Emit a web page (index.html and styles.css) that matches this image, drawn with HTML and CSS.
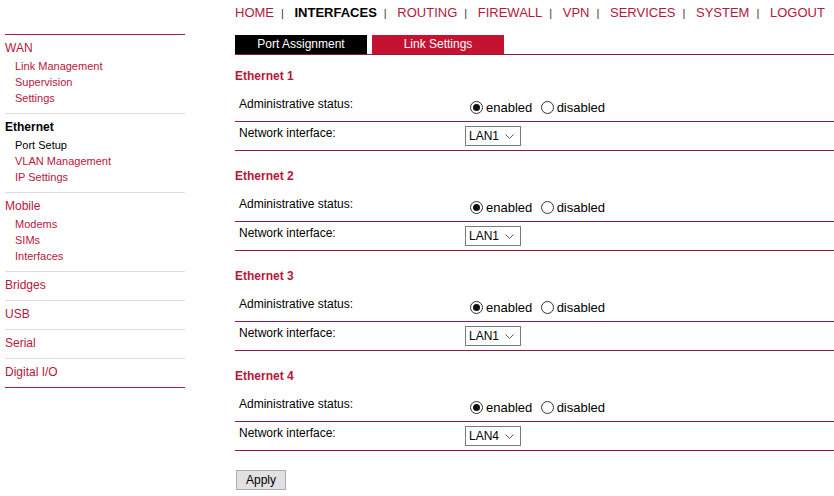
FILE: index.html
```html
<!DOCTYPE html>
<html lang="en">
<head>
    <meta charset="UTF-8">
    <meta name="viewport" content="width=device-width, initial-scale=1.0">
    <title>Interfaces - Port Setup</title>
    <link rel="stylesheet" href="styles.css">
</head>
<body>
    <div class="page">
        <!-- left menu -->
        <div class="sidebar">
            <div class="menu-group">
                <a class="menu-main" href="#">WAN</a>
                <div class="menu-sub">
                    <a href="#">Link Management</a>
                    <a href="#">Supervision</a>
                    <a href="#">Settings</a>
                </div>
            </div>
            <div class="menu-group">
                <a class="menu-main active" href="#">Ethernet</a>
                <div class="menu-sub">
                    <a class="active" href="#">Port Setup</a>
                    <a href="#">VLAN Management</a>
                    <a href="#">IP Settings</a>
                </div>
            </div>
            <div class="menu-group">
                <a class="menu-main" href="#">Mobile</a>
                <div class="menu-sub">
                    <a href="#">Modems</a>
                    <a href="#">SIMs</a>
                    <a href="#">Interfaces</a>
                </div>
            </div>
            <div class="menu-group">
                <a class="menu-main" href="#">Bridges</a>
            </div>
            <div class="menu-group">
                <a class="menu-main" href="#">USB</a>
            </div>
            <div class="menu-group">
                <a class="menu-main" href="#">Serial</a>
            </div>
            <div class="menu-group last">
                <a class="menu-main" href="#">Digital I/O</a>
            </div>
        </div>

        <div class="main">
            <!-- top menu -->
            <div class="topnav">
                <a href="#">HOME</a><span class="sep">|</span>
                <a class="active" href="#">INTERFACES</a><span class="sep">|</span>
                <a href="#">ROUTING</a><span class="sep">|</span>
                <a href="#">FIREWALL</a><span class="sep">|</span>
                <a href="#">VPN</a><span class="sep">|</span>
                <a href="#">SERVICES</a><span class="sep">|</span>
                <a href="#">SYSTEM</a><span class="sep">|</span>
                <a href="#">LOGOUT</a>
            </div>

            <div class="tabs">
                <a class="tab active" href="#">Port Assignment</a>
                <a class="tab" href="#">Link Settings</a>
            </div>

            <form class="port-form">
                <div class="port-section">
                    <h3>Ethernet 1</h3>
                    <div class="form-row">
                        <div class="form-label">Administrative status:</div>
                        <div class="form-value radios">
                            <label><input type="radio" name="eth1" checked>enabled</label>
                            <label><input type="radio" name="eth1">disabled</label>
                        </div>
                    </div>
                    <div class="form-row">
                        <div class="form-label">Network interface:</div>
                        <div class="form-value">
                            <span class="select-wrap">
                                <select><option>LAN1</option><option>LAN2</option><option>LAN3</option><option>LAN4</option></select>
                                <svg class="chevron" width="9" height="5" viewBox="0 0 9 5"><path d="M0.5 0.5 L4.5 4.5 L8.5 0.5" fill="none" stroke="#555" stroke-width="1"/></svg>
                            </span>
                        </div>
                    </div>
                </div>

                <div class="port-section">
                    <h3>Ethernet 2</h3>
                    <div class="form-row">
                        <div class="form-label">Administrative status:</div>
                        <div class="form-value radios">
                            <label><input type="radio" name="eth2" checked>enabled</label>
                            <label><input type="radio" name="eth2">disabled</label>
                        </div>
                    </div>
                    <div class="form-row">
                        <div class="form-label">Network interface:</div>
                        <div class="form-value">
                            <span class="select-wrap">
                                <select><option>LAN1</option><option>LAN2</option><option>LAN3</option><option>LAN4</option></select>
                                <svg class="chevron" width="9" height="5" viewBox="0 0 9 5"><path d="M0.5 0.5 L4.5 4.5 L8.5 0.5" fill="none" stroke="#555" stroke-width="1"/></svg>
                            </span>
                        </div>
                    </div>
                </div>

                <div class="port-section">
                    <h3>Ethernet 3</h3>
                    <div class="form-row">
                        <div class="form-label">Administrative status:</div>
                        <div class="form-value radios">
                            <label><input type="radio" name="eth3" checked>enabled</label>
                            <label><input type="radio" name="eth3">disabled</label>
                        </div>
                    </div>
                    <div class="form-row">
                        <div class="form-label">Network interface:</div>
                        <div class="form-value">
                            <span class="select-wrap">
                                <select><option>LAN1</option><option>LAN2</option><option>LAN3</option><option>LAN4</option></select>
                                <svg class="chevron" width="9" height="5" viewBox="0 0 9 5"><path d="M0.5 0.5 L4.5 4.5 L8.5 0.5" fill="none" stroke="#555" stroke-width="1"/></svg>
                            </span>
                        </div>
                    </div>
                </div>

                <div class="port-section">
                    <h3>Ethernet 4</h3>
                    <div class="form-row">
                        <div class="form-label">Administrative status:</div>
                        <div class="form-value radios">
                            <label><input type="radio" name="eth4" checked>enabled</label>
                            <label><input type="radio" name="eth4">disabled</label>
                        </div>
                    </div>
                    <div class="form-row">
                        <div class="form-label">Network interface:</div>
                        <div class="form-value">
                            <span class="select-wrap">
                                <select><option>LAN1</option><option>LAN2</option><option>LAN3</option><option selected>LAN4</option></select>
                                <svg class="chevron" width="9" height="5" viewBox="0 0 9 5"><path d="M0.5 0.5 L4.5 4.5 L8.5 0.5" fill="none" stroke="#555" stroke-width="1"/></svg>
                            </span>
                        </div>
                    </div>
                </div>

                <button type="button" class="apply-btn">Apply</button>
            </form>
        </div>
    </div>
</body>
</html>
```

FILE: styles.css
```css
html, body {
    margin: 0;
    padding: 0;
    background: #fff;
}
body {
    font-family: "Liberation Sans", Arial, sans-serif;
    font-size: 12px;
    color: #000;
}
a {
    text-decoration: none;
    color: #b5173d;
}

.page {
    display: flex;
    align-items: flex-start;
}

/* left menu */
.sidebar {
    width: 180px;
    margin-left: 5px;
    margin-top: 34px;
    flex-shrink: 0;
}
.menu-group {
    border-top: 1px solid #dcdcdc;
    padding: 5px 0 7px;
}
.menu-group:first-child {
    border-top-color: #a8193d;
}
.menu-group.last {
    border-bottom: 1px solid #b5173d;
}
.menu-main {
    display: block;
    font-size: 12px;
    line-height: 16px;
}
.menu-main.active {
    color: #000;
    font-weight: bold;
}
.menu-sub {
    margin-top: 2px;
    padding-left: 10px;
}
.menu-sub a {
    display: block;
    font-size: 11px;
    line-height: 16px;
}
.menu-sub a.active {
    color: #000;
}

/* main column */
.main {
    flex: 1;
    margin-left: 50px;
}
.topnav {
    height: 35px;
    line-height: 26px;
    font-size: 13px;
    white-space: nowrap;
}
.topnav a {
    color: #b5173d;
}
.topnav a.active {
    color: #000;
    font-weight: bold;
}
.topnav .sep {
    font-size: 11px;
    color: #333;
    margin: 0 7px;
}

.tabs {
    display: flex;
    gap: 5px;
    border-bottom: 1px solid #8e1b3f;
}
.tab {
    width: 132px;
    height: 19px;
    line-height: 18px;
    text-align: center;
    color: #fff;
    background: #c41230;
    font-size: 12px;
}
.tab.active {
    background: #000;
}

.port-form {
    margin: 0;
}
.port-section h3 {
    margin: 14px 0 10px;
    font-size: 12px;
    line-height: 14px;
    color: #b5173d;
}
.port-section + .port-section h3 {
    margin-top: 18px;
}
.form-row {
    display: flex;
    height: 28px;
    border-bottom: 1px solid #8e1b3f;
}
.form-label {
    width: 226px;
    padding: 4px 0 0 4px;
    line-height: 14px;
    font-size: 12px;
}
.form-value {
    padding-top: 4px;
}
.form-value.radios {
    padding-top: 8px;
    line-height: 14px;
}
.radios label {
    font-size: 13px;
}
.radios input {
    appearance: none;
    width: 13px;
    height: 13px;
    margin: 0 3px 0 5px;
    border: 1px solid #333;
    border-radius: 50%;
    background: #fff;
    vertical-align: -2px;
    box-sizing: border-box;
    position: relative;
}
.radios input:checked::after {
    content: "";
    position: absolute;
    left: 2px;
    top: 2px;
    width: 7px;
    height: 7px;
    border-radius: 50%;
    background: #111;
}

.select-wrap {
    position: relative;
    display: inline-block;
}
.select-wrap select {
    appearance: none;
    width: 56px;
    height: 20px;
    border: 1px solid #7a7a7a;
    border-radius: 0;
    background: #fff;
    padding: 0 0 0 3px;
    font-family: "Liberation Sans", Arial, sans-serif;
    font-size: 12px;
    color: #000;
}
.chevron {
    position: absolute;
    right: 7px;
    top: 8px;
    pointer-events: none;
}

.apply-btn {
    margin: 19px 0 0 1px;
    width: 50px;
    height: 20px;
    padding: 0;
    font-family: "Liberation Sans", Arial, sans-serif;
    font-size: 12px;
    color: #000;
    background: #e1e1e1;
    border: 1px solid #adadad;
    border-radius: 0;
}
```
